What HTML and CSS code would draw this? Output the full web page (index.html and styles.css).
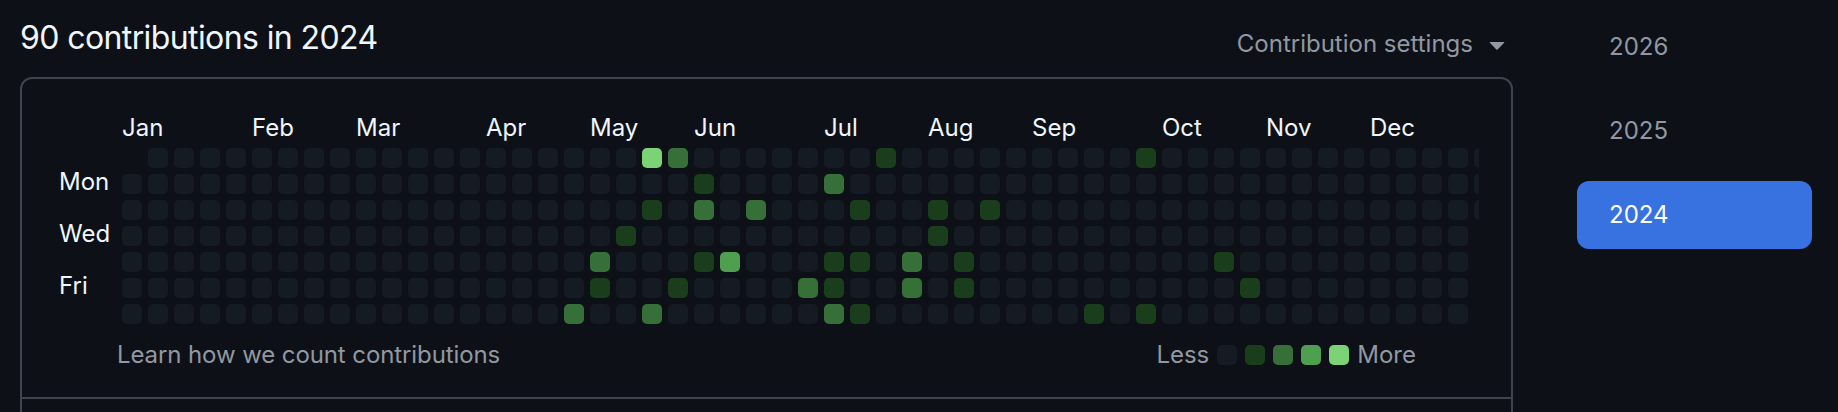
FILE: index.html
```html
<!DOCTYPE html>
<html lang="en">
<head>
<meta charset="utf-8">
<title>Contributions</title>
<link rel="stylesheet" href="styles.css">
</head>
<body>
<div class="page">
  <div class="main">
    <div class="header">
      <h2 class="title">90 contributions in 2024</h2>
      <div class="settings">
        <span>Contribution settings</span>
        <svg viewBox="0 0 16 16" aria-hidden="true"><path d="m4.427 7.427 3.396 3.396a.25.25 0 0 0 .354 0l3.396-3.396A.25.25 0 0 0 11.396 7H4.604a.25.25 0 0 0-.177.427Z"/></svg>
      </div>
    </div>
    <div class="card">
      <div class="calendar">
        <div class="months">
          <span class="w5">Jan</span><span class="w4">Feb</span><span class="w5">Mar</span><span class="w4">Apr</span><span class="w4">May</span><span class="w5">Jun</span><span class="w4">Jul</span><span class="w4">Aug</span><span class="w5">Sep</span><span class="w4">Oct</span><span class="w4">Nov</span><span class="w5">Dec</span>
        </div>
        <div class="graph">
          <div class="daynames"><span></span><span>Mon</span><span></span><span>Wed</span><span></span><span>Fri</span><span></span></div>
          <div class="days">
<i class="x"></i><i></i><i></i><i></i><i></i><i></i><i></i>
<i></i><i></i><i></i><i></i><i></i><i></i><i></i>
<i></i><i></i><i></i><i></i><i></i><i></i><i></i>
<i></i><i></i><i></i><i></i><i></i><i></i><i></i>
<i></i><i></i><i></i><i></i><i></i><i></i><i></i>
<i></i><i></i><i></i><i></i><i></i><i></i><i></i>
<i></i><i></i><i></i><i></i><i></i><i></i><i></i>
<i></i><i></i><i></i><i></i><i></i><i></i><i></i>
<i></i><i></i><i></i><i></i><i></i><i></i><i></i>
<i></i><i></i><i></i><i></i><i></i><i></i><i></i>
<i></i><i></i><i></i><i></i><i></i><i></i><i></i>
<i></i><i></i><i></i><i></i><i></i><i></i><i></i>
<i></i><i></i><i></i><i></i><i></i><i></i><i></i>
<i></i><i></i><i></i><i></i><i></i><i></i><i></i>
<i></i><i></i><i></i><i></i><i></i><i></i><i></i>
<i></i><i></i><i></i><i></i><i></i><i></i><i></i>
<i></i><i></i><i></i><i></i><i></i><i></i><i></i>
<i></i><i></i><i></i><i></i><i></i><i></i><i class="l2"></i>
<i></i><i></i><i></i><i></i><i class="l2"></i><i class="l1"></i><i></i>
<i></i><i></i><i></i><i class="l1"></i><i></i><i></i><i></i>
<i class="l4"></i><i></i><i class="l1"></i><i></i><i></i><i></i><i class="l2"></i>
<i class="l2"></i><i></i><i></i><i></i><i></i><i class="l1"></i><i></i>
<i></i><i class="l1"></i><i class="l2"></i><i></i><i class="l1"></i><i></i><i></i>
<i></i><i></i><i></i><i></i><i class="l3"></i><i></i><i></i>
<i></i><i></i><i class="l2"></i><i></i><i></i><i></i><i></i>
<i></i><i></i><i></i><i></i><i></i><i></i><i></i>
<i></i><i></i><i></i><i></i><i></i><i class="l2"></i><i></i>
<i></i><i class="l2"></i><i></i><i></i><i class="l1"></i><i class="l1"></i><i class="l2"></i>
<i></i><i></i><i class="l1"></i><i></i><i class="l1"></i><i></i><i class="l1"></i>
<i class="l1"></i><i></i><i></i><i></i><i></i><i></i><i></i>
<i></i><i></i><i></i><i></i><i class="l2"></i><i class="l2"></i><i></i>
<i></i><i></i><i class="l1"></i><i class="l1"></i><i></i><i></i><i></i>
<i></i><i></i><i></i><i></i><i class="l1"></i><i class="l1"></i><i></i>
<i></i><i></i><i class="l1"></i><i></i><i></i><i></i><i></i>
<i></i><i></i><i></i><i></i><i></i><i></i><i></i>
<i></i><i></i><i></i><i></i><i></i><i></i><i></i>
<i></i><i></i><i></i><i></i><i></i><i></i><i></i>
<i></i><i></i><i></i><i></i><i></i><i></i><i class="l1"></i>
<i></i><i></i><i></i><i></i><i></i><i></i><i></i>
<i class="l1"></i><i></i><i></i><i></i><i></i><i></i><i class="l1"></i>
<i></i><i></i><i></i><i></i><i></i><i></i><i></i>
<i></i><i></i><i></i><i></i><i></i><i></i><i></i>
<i></i><i></i><i></i><i></i><i class="l1"></i><i></i><i></i>
<i></i><i></i><i></i><i></i><i></i><i class="l1"></i><i></i>
<i></i><i></i><i></i><i></i><i></i><i></i><i></i>
<i></i><i></i><i></i><i></i><i></i><i></i><i></i>
<i></i><i></i><i></i><i></i><i></i><i></i><i></i>
<i></i><i></i><i></i><i></i><i></i><i></i><i></i>
<i></i><i></i><i></i><i></i><i></i><i></i><i></i>
<i></i><i></i><i></i><i></i><i></i><i></i><i></i>
<i></i><i></i><i></i><i></i><i></i><i></i><i></i>
<i></i><i></i><i></i><i></i><i></i><i></i><i></i>
<i></i><i></i><i></i>
          </div>
        </div>
      </div>
      <div class="footer">
        <a class="learn">Learn how we count contributions</a>
        <div class="legend">
          <span>Less</span>
          <i class="sq"></i><i class="sq l1"></i><i class="sq l2"></i><i class="sq l3"></i><i class="sq l4"></i>
          <span>More</span>
        </div>
      </div>
    </div>
    <div class="overview"></div>
  </div>
  <ul class="years">
    <li class="year">2026</li>
    <li class="year">2025</li>
    <li class="year selected">2024</li>
  </ul>
</div>
</body>
</html>
```

FILE: styles.css
```css
* { box-sizing: border-box; }
html, body { margin: 0; padding: 0; background: #0d1117; }
body {
  font-family: Inter, "Noto Sans", "Liberation Sans", sans-serif;
  color: #f0f6fc;
  height: 412px;
  overflow: hidden;
}
.page { display: flex; align-items: flex-start; padding: 13px 0 0 20px; }
.main { width: 1493px; flex-shrink: 0; }
.header {
  display: flex;
  justify-content: space-between;
  align-items: flex-end;
  padding-top: 1px;
  margin-bottom: 15px;
}
.title { margin: 0; font-size: 32px; line-height: 48px; font-weight: 400; letter-spacing: -0.6px; }
.settings {
  display: flex;
  align-items: center;
  gap: 8px;
  font-size: 24px;
  line-height: 36px;
  color: #9198a1;
}
.settings svg { width: 32px; height: 32px; fill: #9198a1; display: block; }
.card {
  border: 2px solid #3d444d;
  border-radius: 12px 12px 0 0;
  padding: 34px 32px 27px;
}
.calendar { overflow: hidden; padding-left: 5px; }
.months {
  display: grid;
  grid-template-columns: repeat(53, 20px);
  column-gap: 6px;
  margin-left: 63px;
  height: 30px;
  font-size: 24px;
  line-height: 30px;
  white-space: nowrap;
}
.months .w4 { grid-column: span 4; }
.months .w5 { grid-column: span 5; }
.graph { display: flex; gap: 6px; margin-top: 5px; }
.daynames {
  display: grid;
  grid-template-rows: repeat(7, 20px);
  row-gap: 6px;
  width: 57px;
  flex-shrink: 0;
  font-size: 24px;
  line-height: 16px;
}
.days {
  display: grid;
  grid-template-rows: repeat(7, 20px);
  grid-auto-flow: column;
  grid-auto-columns: 20px;
  gap: 6px;
  flex-shrink: 0;
}
.days i, .legend .sq {
  display: block;
  width: 20px;
  height: 20px;
  border-radius: 5px;
  background: #151b23;
}
.days i.x { background: transparent; }
.days i.l1, .legend .l1 { background: #1a3e1c; }
.days i.l2, .legend .l2 { background: #366f38; }
.days i.l3, .legend .l3 { background: #4f9f51; }
.days i.l4, .legend .l4 { background: #7bd375; }
.footer {
  display: flex;
  justify-content: space-between;
  align-items: center;
  margin-top: 16px;
  padding: 0 63px;
  height: 30px;
  font-size: 24px;
  line-height: 30px;
  color: #9198a1;
}
.learn { color: #9198a1; text-decoration: none; letter-spacing: -0.1px; }
.legend { display: flex; align-items: center; gap: 8px; }
.overview {
  border-left: 2px solid #3d444d;
  border-right: 2px solid #3d444d;
  height: 13px;
}
.years { list-style: none; margin: 0 0 0 64px; padding: 0; width: 235px; flex-shrink: 0; }
.year {
  padding: 16px 32px;
  margin-bottom: 16px;
  font-size: 24px;
  line-height: 36px;
  border-radius: 12px;
  color: #9198a1;
}
.year.selected { background: #3871e0; color: #ffffff; }
```
